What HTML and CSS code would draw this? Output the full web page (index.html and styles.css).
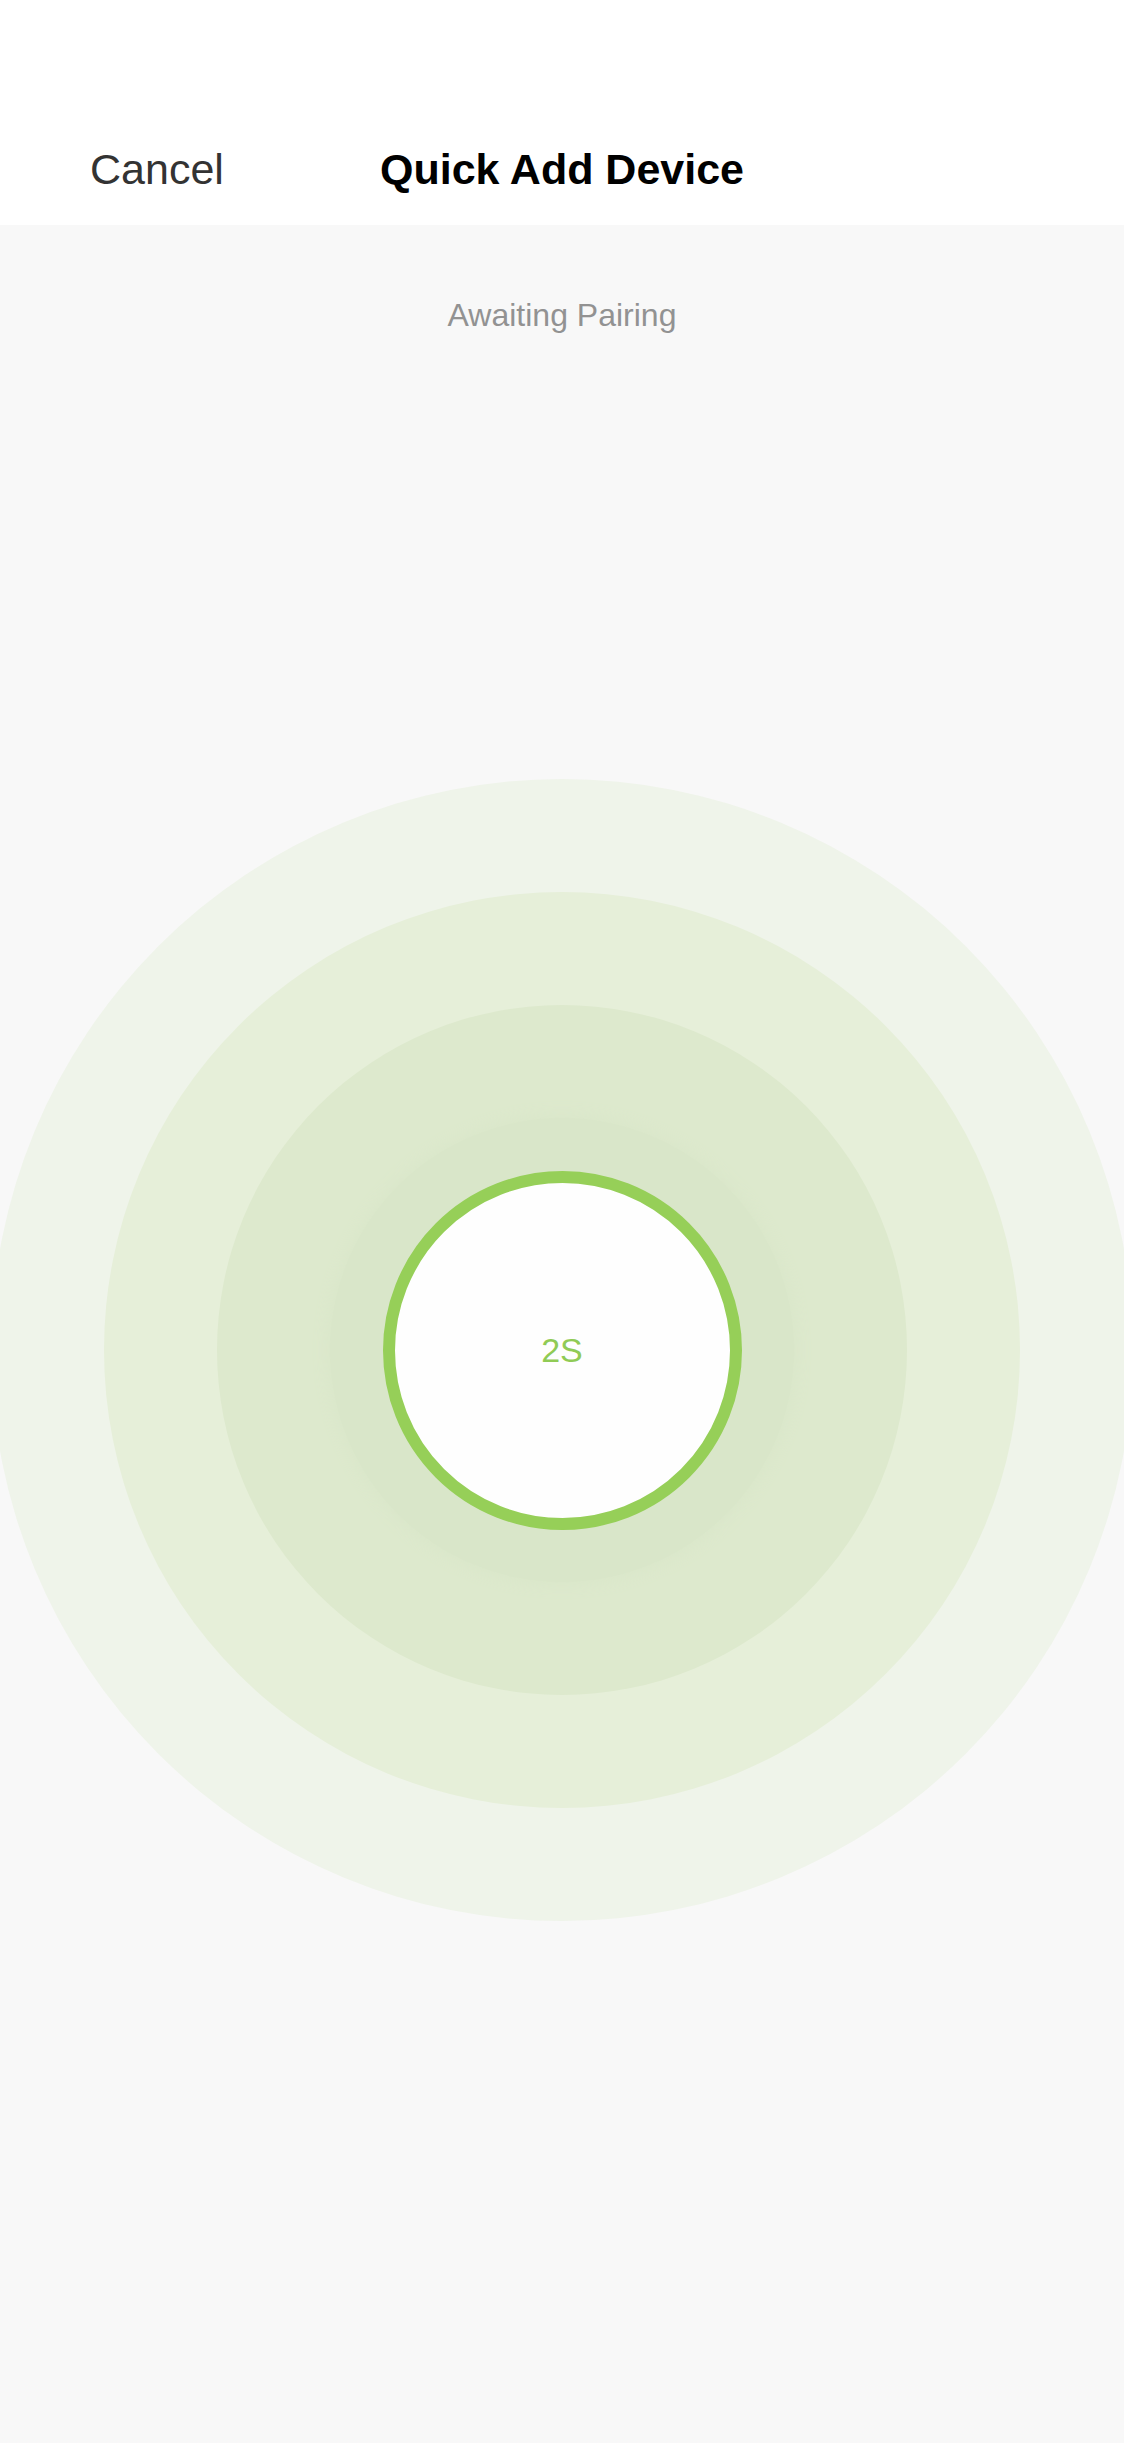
FILE: index.html
```html
<!DOCTYPE html>
<html lang="en">
<head>
    <meta charset="UTF-8">
    <meta name="viewport" content="width=device-width, initial-scale=1.0">
    <title>Quick Add Device</title>
    <link rel="stylesheet" href="styles.css">
</head>
<body>
    <header class="nav-bar">
        <a class="nav-cancel" href="#">Cancel</a>
        <h1 class="nav-title">Quick Add Device</h1>
        <span></span>
    </header>
    <main class="pairing">
        <p class="pairing-status">Awaiting Pairing</p>
        <div class="radar">
            <div class="wave wave-1">
                <div class="wave wave-2">
                    <div class="wave wave-3">
                        <div class="wave wave-4">
                            <div class="timer">2S</div>
                        </div>
                    </div>
                </div>
            </div>
        </div>
    </main>
</body>
</html>
```

FILE: styles.css
```css
* {
    margin: 0;
    padding: 0;
    box-sizing: border-box;
    font-family: 'Liberation Sans', Arial, sans-serif;
}

html, body {
    overflow-x: hidden;
}

body {
    background-color: #f8f8f8;
    min-height: 100vh;
}

.nav-bar {
    height: 225px;
    background: #fff;
    display: grid;
    grid-template-columns: 1fr auto 1fr;
    align-items: end;
    padding: 0 0 31px 90px;
}

.nav-cancel {
    color: #333;
    font-size: 43px;
    line-height: 50px;
    text-decoration: none;
    justify-self: start;
}

.nav-title {
    color: #000;
    font-size: 43px;
    line-height: 50px;
    font-weight: bold;
    margin-left: -90px;
}

.pairing {
    display: flex;
    flex-direction: column;
    align-items: center;
}

.pairing-status {
    margin-top: 72px;
    color: #929292;
    font-size: 32px;
    line-height: 37px;
}

.radar {
    margin-top: 445px;
    width: 100%;
    display: flex;
    justify-content: center;
}

.wave {
    flex-shrink: 0;
    border-radius: 50%;
    display: flex;
    justify-content: center;
    align-items: center;
}

.wave-1 {
    width: 1142px;
    height: 1142px;
    background: #eff4ea;
}

.wave-2 {
    width: 916px;
    height: 916px;
    background: #e6efd9;
}

.wave-3 {
    width: 690px;
    height: 690px;
    background: #dde9cd;
}

.wave-4 {
    width: 464px;
    height: 464px;
    background: #d9e6c9;
    box-shadow: 0 0 14px 4px #dae7ca;
}

.timer {
    width: 359px;
    height: 359px;
    border-radius: 50%;
    border: 12px solid #96cf58;
    background: #fefefe;
    display: flex;
    justify-content: center;
    align-items: center;
    color: #90cb55;
    font-size: 34px;
}
```
